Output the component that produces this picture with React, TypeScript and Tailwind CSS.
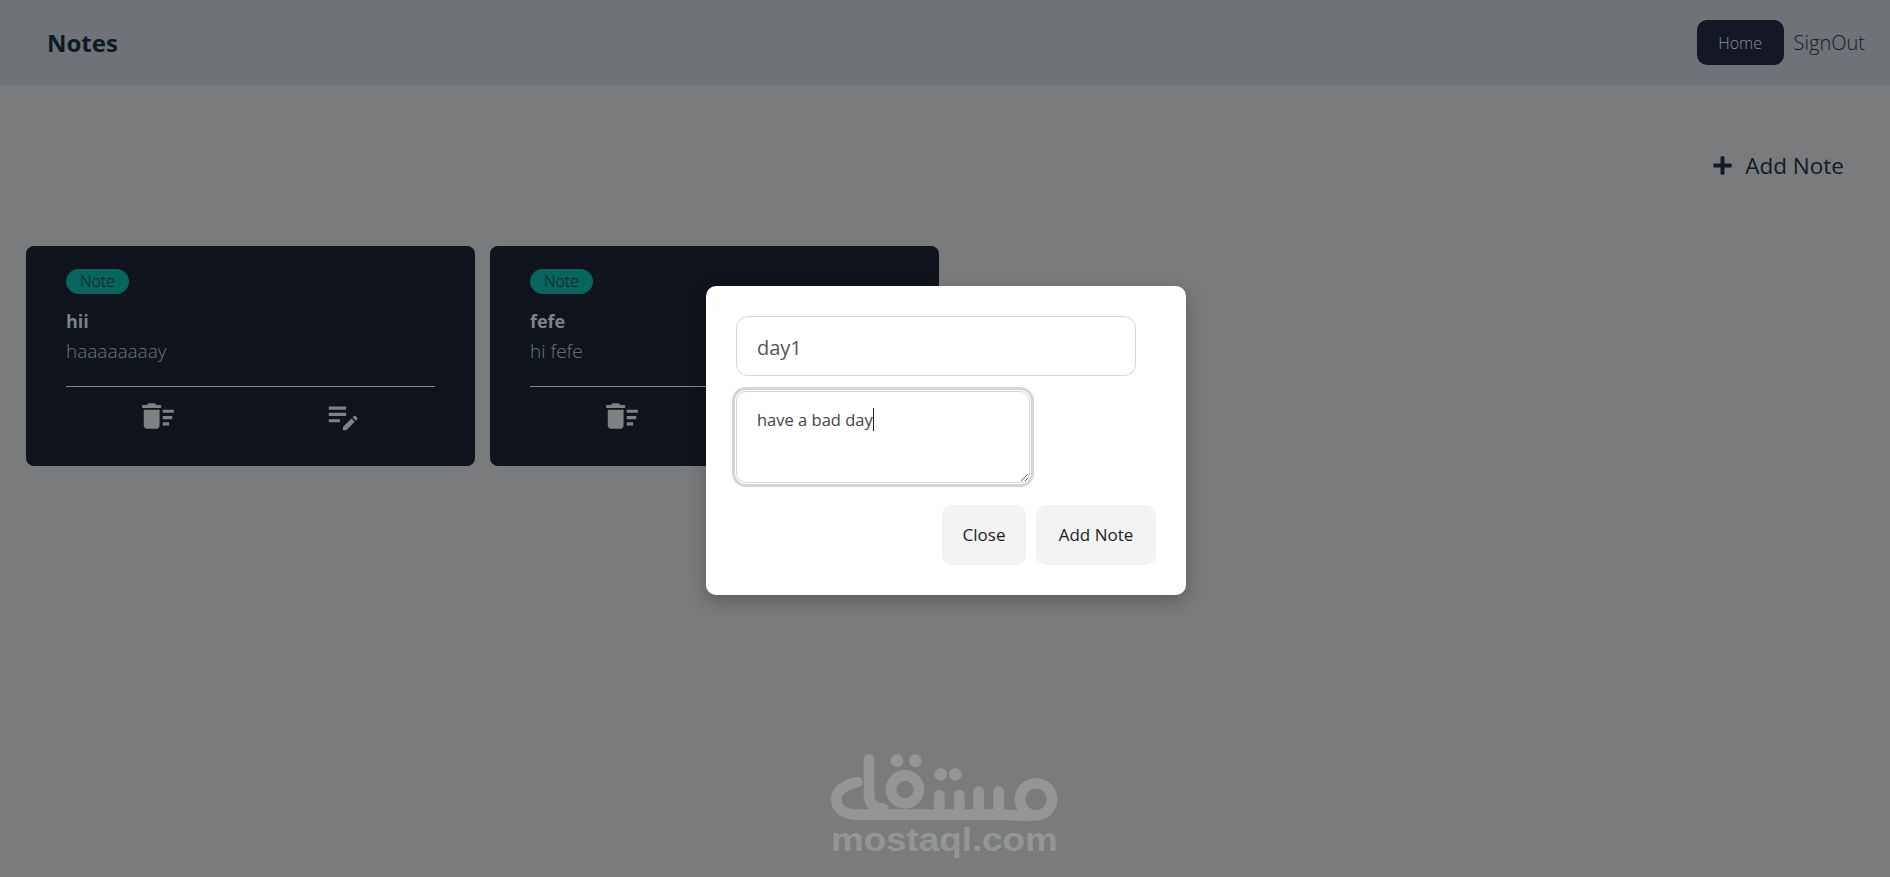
import { FaPlus } from "react-icons/fa";
import { MdDeleteSweep, MdEditNote } from "react-icons/md";

const notes = [
  { title: "hii", body: "haaaaaaaay" },
  { title: "fefe", body: "hi fefe" },
];

const MostaqlLogo = () => (
  <svg width="280" height="147" viewBox="0 0 840 441" fill="none" stroke="#949696" strokeWidth="32" strokeLinecap="round">
    {/* lam + base line */}
    <path d="M172 156C130 165 109 185 109 208C109 238 135 254 175 254H600C630 254 650 256 690 258" />
    <path d="M207 88V195C207 222 222 236 250 236" />
    {/* qaf */}
    <circle cx="315" cy="178" r="42" />
    <circle cx="291" cy="92" r="19" fill="#949696" stroke="none" />
    <circle cx="346" cy="92" r="19" fill="#949696" stroke="none" />
    {/* teeth */}
    <path d="M418 236V195M478 236V195M536 236V185M596 236V185" />
    <circle cx="422" cy="133" r="19" fill="#949696" stroke="none" />
    <circle cx="466" cy="133" r="19" fill="#949696" stroke="none" />
    {/* meem */}
    <circle cx="708" cy="208" r="48" />
    <text
      x="93"
      y="364"
      fill="#949696"
      stroke="none"
      fontFamily="Liberation Sans, sans-serif"
      fontWeight="700"
      fontSize="100"
      textLength="680"
      lengthAdjust="spacingAndGlyphs"
    >
      mostaql.com
    </text>
  </svg>
);

const NoteCard = ({ title, body }: { title: string; body: string }) => (
  <div className="w-[449px] h-[220px] rounded-lg bg-[#0f131c] pt-[23px] px-10">
    <span className="inline-flex h-[25px] w-[63px] items-center justify-center rounded-full bg-[#06665e] text-[16px] font-light text-[#0b1a20]">
      Note
    </span>
    <h5 className="mt-[13px] text-[18px] leading-[28px] font-bold text-[#7d8284]">{title}</h5>
    <p className="mt-[3px] text-[19px] leading-[27px] font-light text-[#6a7878]">{body}</p>
    <div className="mt-[21px] h-px bg-[#85868a]" />
    <div className="mt-[10px] flex justify-around text-[#808183]">
      <MdDeleteSweep size={38} />
      <MdEditNote size={38} />
    </div>
  </div>
);

export default function App() {
  return (
    <div className="relative h-[877px] overflow-hidden bg-[#7a7b7d] font-['Open_Sans','Noto_Sans',sans-serif]">
      <nav className="flex h-[85px] items-center justify-between bg-[#6f7277] pl-[47px] pr-[25px]">
        <span className="text-[24px] font-bold text-[#0d1a22]">Notes</span>
        <div className="flex items-center gap-[10px]">
          <a className="flex h-[45px] w-[87px] items-center justify-center rounded-[10px] bg-[#141824] text-[16px] font-light text-[#8b9192]">
            Home
          </a>
          <a className="text-[20px] font-light text-[#0a2226]">SignOut</a>
        </div>
      </nav>

      <div className="flex justify-end pr-[46px] pt-[64px]">
        <button className="flex items-center gap-[12px] text-[22.5px] font-medium text-[#111a26]">
          <FaPlus size={21} />
          Add Note
        </button>
      </div>

      <div className="mt-[63px] flex gap-[15px] pl-[26px]">
        {notes.map((note) => (
          <NoteCard key={note.title} {...note} />
        ))}
      </div>

      <div className="absolute left-[706px] top-[286px] h-[309px] w-[480px] rounded-[10px] bg-white pl-[30px] pr-[30px] pt-[30px] shadow-[0_6px_18px_rgba(0,0,0,0.25)]">
        <input
          readOnly
          value="day1"
          className="h-[60px] w-[400px] rounded-[12px] border border-[#d5d5d8] pl-5 pt-[2px] text-[20px] text-[#555] outline-none"
        />
        <div className="relative mt-[15px] w-[294px]">
          <textarea
            readOnly
            value="have a bad day"
            className="block h-[92px] w-[294px] rounded-[10px] border border-[#d5d5d8] px-5 py-[16px] text-[16.5px] leading-[24px] text-[#444] outline-[3px] outline-offset-[1px] outline-[#d5d5d8] [outline-style:solid]"
          />
          <span className="absolute left-[137px] top-[17px] h-[23px] w-px bg-[#222]" />
        </div>
        <div className="mt-[22px] flex justify-end gap-[10px]">
          <button className="h-[60px] w-[84px] rounded-[10px] bg-[#f3f3f4] text-[17px] text-[#222]">Close</button>
          <button className="h-[60px] w-[120px] rounded-[10px] bg-[#f3f3f4] text-[17px] text-[#222]">Add Note</button>
        </div>
      </div>

      <div className="absolute left-[800px] top-[730px]">
        <MostaqlLogo />
      </div>
    </div>
  );
}
